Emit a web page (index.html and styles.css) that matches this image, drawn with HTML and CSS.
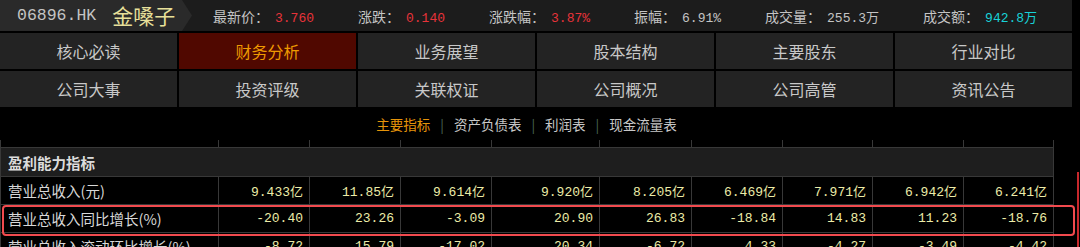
FILE: index.html
```html
<!DOCTYPE html>
<html lang="zh-CN">
<head>
<meta charset="UTF-8">
<title>金嗓子 财务分析</title>
<link rel="stylesheet" href="styles.css">
</head>
<body>
<div class="page">
  <div class="quote-bar">
    <div class="stock">
      <span class="code">06896.HK</span>
      <span class="name">金嗓子</span>
    </div>
    <div class="quotes">
      <span class="q"><span class="lbl">最新价：</span><span class="val up">3.760</span></span>
      <span class="q"><span class="lbl">涨跌：</span><span class="val up">0.140</span></span>
      <span class="q"><span class="lbl">涨跌幅：</span><span class="val up">3.87%</span></span>
      <span class="q"><span class="lbl">振幅：</span><span class="val">6.91%</span></span>
      <span class="q"><span class="lbl">成交量：</span><span class="val">255.3万</span></span>
      <span class="q"><span class="lbl">成交额：</span><span class="val amount">942.8万</span></span>
    </div>
  </div>

  <div class="nav">
    <div class="nav-item">核心必读</div>
    <div class="nav-item active">财务分析</div>
    <div class="nav-item">业务展望</div>
    <div class="nav-item">股本结构</div>
    <div class="nav-item">主要股东</div>
    <div class="nav-item">行业对比</div>
    <div class="nav-item">公司大事</div>
    <div class="nav-item">投资评级</div>
    <div class="nav-item">关联权证</div>
    <div class="nav-item">公司概况</div>
    <div class="nav-item">公司高管</div>
    <div class="nav-item">资讯公告</div>
  </div>

  <div class="subtabs">
    <span class="tab active">主要指标</span>
    <span class="sep">|</span>
    <span class="tab">资产负债表</span>
    <span class="sep">|</span>
    <span class="tab">利润表</span>
    <span class="sep">|</span>
    <span class="tab">现金流量表</span>
  </div>

  <table class="fin">
    <colgroup>
      <col style="width:218px"><col style="width:91px"><col style="width:91px"><col style="width:91px"><col style="width:108px">
      <col style="width:92px"><col style="width:91px"><col style="width:90px"><col style="width:91px"><col style="width:90px">
    </colgroup>
    <tr class="cut">
      <td></td><td></td><td></td><td></td><td></td><td></td><td></td><td></td><td></td><td></td>
    </tr>
    <tr class="section">
      <td colspan="10">盈利能力指标</td>
    </tr>
    <tr>
      <td class="label">营业总收入(元)</td>
      <td>9.433亿</td><td>11.85亿</td><td>9.614亿</td><td>9.920亿</td><td>8.205亿</td>
      <td>6.469亿</td><td>7.971亿</td><td>6.942亿</td><td>6.241亿</td>
    </tr>
    <tr>
      <td class="label">营业总收入同比增长(%)</td>
      <td>-20.40</td><td>23.26</td><td>-3.09</td><td>20.90</td><td>26.83</td>
      <td>-18.84</td><td>14.83</td><td>11.23</td><td>-18.76</td>
    </tr>
    <tr>
      <td class="label">营业总收入滚动环比增长(%)</td>
      <td>-8.72</td><td>15.79</td><td>-17.02</td><td>20.34</td><td>-6.72</td>
      <td>4.33</td><td>-4.27</td><td>-3.49</td><td>-4.42</td>
    </tr>
  </table>

  <div class="mark"></div>
  <div class="mark-edge"></div>
</div>
</body>
</html>
```

FILE: styles.css
```css
body {
  margin: 0;
  background-color: #000;
  font-family: "Noto Sans CJK SC", "Liberation Sans", sans-serif;
  color: #c8c8c8;
}
.page {
  position: relative;
  width: 1080px;
  height: 247px;
  overflow: hidden;
}
.quote-bar {
  width: 1072px;
  height: 31px;
  background-color: #1c1c1c;
  display: flex;
  align-items: center;
}
.stock {
  width: 192px;
  height: 100%;
  box-sizing: border-box;
  padding-left: 17px;
  background-color: #2a2a2a;
  clip-path: polygon(0 0, 182px 0, 192px 50%, 182px 100%, 0 100%);
  display: flex;
  align-items: center;
}
.code {
  font-family: "Liberation Mono", monospace;
  font-size: 16.5px;
  color: #c4c4c4;
}
.name {
  margin-left: 16px;
  font-size: 21px;
  color: #e8e09a;
  line-height: 1;
}
.quotes {
  margin-left: 21px;
  display: flex;
  gap: 44px;
  font-size: 14px;
}
.q {
  display: flex;
  align-items: baseline;
}
.lbl {
  color: #c4c4c4;
}
.val {
  font-family: "Liberation Mono", monospace;
  font-size: 13px;
  color: #c4c4c4;
  margin-left: 6px;
}
.val.up {
  color: #e8333a;
}
.val.amount {
  color: #18d2d8;
}
.nav {
  margin-top: 2px;
  width: 1072px;
  display: grid;
  grid-template-columns: repeat(6, 177px);
  grid-auto-rows: 36px;
  gap: 2px;
}
.nav-item {
  background-color: #232323;
  display: flex;
  align-items: center;
  justify-content: center;
  font-size: 16px;
  color: #c8c8c8;
}
.nav-item.active {
  background-color: #500800;
  color: #ee9a00;
}
.subtabs {
  width: 1053px;
  height: 33px;
  display: flex;
  align-items: center;
  justify-content: center;
  font-size: 13.5px;
  color: #c8c8c8;
}
.tab.active {
  color: #e6940a;
}
.sep {
  color: #4b6656;
  margin: 0 10px;
}
.fin {
  width: 1053px;
  border-collapse: collapse;
  table-layout: fixed;
}
.fin td {
  border: 1px solid #383838;
  height: 27px;
  padding: 0 6px 0 0;
  text-align: right;
  font-family: "Liberation Mono", "Noto Sans CJK SC", monospace;
  font-size: 13px;
  color: #ececa8;
  white-space: nowrap;
  overflow: hidden;
}
.fin tr.cut td {
  height: 7px;
  border-top: none;
}
.fin tr.section td {
  height: 28px;
  text-align: left;
  padding-left: 7px;
  background-color: #1e1e1e;
  font-family: "Noto Sans CJK SC", sans-serif;
  font-weight: bold;
  font-size: 14.5px;
  color: #dcdcdc;
}
.fin td.label {
  text-align: left;
  padding-left: 7px;
  font-family: "Noto Sans CJK SC", sans-serif;
  font-size: 14.5px;
  color: #d8d8d8;
}
.mark {
  position: absolute;
  left: 2px;
  top: 205px;
  width: 1073px;
  height: 31px;
  box-sizing: border-box;
  border: 2px solid #f24a4e;
  border-radius: 4px;
}
.mark-edge {
  position: absolute;
  left: 1077px;
  top: 172px;
  width: 2px;
  height: 80px;
  background-color: #c8282c;
}
```
